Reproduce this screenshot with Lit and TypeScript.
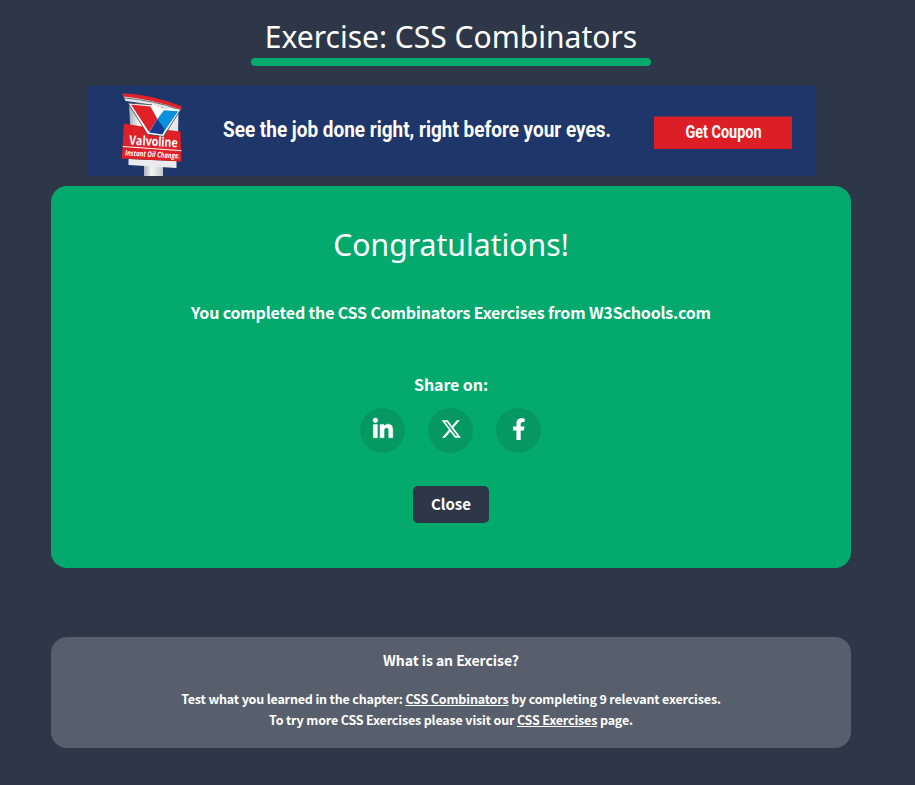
import { LitElement, html, css, svg } from "lit";
import { customElement } from "lit/decorators.js";

@customElement("ad-banner")
class AdBanner extends LitElement {
  static styles = css`
    :host { display: block; width: 728px; height: 90px; }
    svg { display: block; }
    .copy { font-family: Roboto, "Liberation Sans", sans-serif; font-weight: 700; fill: #fff; }
    .brand { font-family: "Open Sans", "Noto Sans", sans-serif; font-weight: 700; fill: #fff; }
    .sub { font-family: "Open Sans", "Noto Sans", sans-serif; font-weight: 700; font-style: italic; fill: #fff; }
  `;
  render() {
    return html`<svg width="728" height="90" viewBox="0 0 728 90">
      <defs>
        <linearGradient id="pole"><stop offset="0" stop-color="#aeb2b8" /><stop offset=".4" stop-color="#f4f4f4" /><stop offset="1" stop-color="#c4c7cb" /></linearGradient>
        <linearGradient id="back"><stop offset="0" stop-color="#a9aeb6" /><stop offset=".2" stop-color="#f5f5f6" /><stop offset="1" stop-color="#e4e6e9" /></linearGradient>
      </defs>
      <rect width="728" height="90" fill="#1f366a" />
      <g transform="translate(1 0)">
        <path d="M56 76H75V90H56z" fill="url(#pole)" />
        <path d="M40.500 73L88.500 75V82L40.500 79z" fill="#e9ebed" />
        <path d="M41 18L42.500 45L90 50L90.500 26z" fill="url(#back)" />
        <path d="M35 9Q63 11 92.500 22L91.500 26Q64 18 37.500 15z" fill="#e3e5e7" />
        <path d="M36 12Q65 14 92.500 24" fill="none" stroke="#656c79" stroke-width="1" />
        <path d="M34.700 7.300Q64 8.500 93.500 20.300V23.700Q64 13 35 10.500z" fill="#e12229" />
        <path d="M36 37.600Q64 43 92.500 45.500L93.500 75.500L33.800 72.500z" fill="#df2027" />
        <path d="M40 17L64 18.500L75 22L92.500 23.800L75.500 50.500L59.500 48.300z" fill="#fff" />
        <path d="M64 18.800L40 17L59.500 48.300L75.500 50.500L92.500 23.800" fill="none" stroke="#454b59" stroke-width=".9" />
        <path d="M43 18.500L62.500 20.500L69.300 33L61 46z" fill="#df2027" />
        <path d="M76 24.200L90.200 25.200L74.500 48L69.300 33z" fill="#0a91db" />
        <path d="M69.300 33L61 46.500L74.500 48.500L76.500 43z" fill="#173a91" />
        <path d="M34.800 60.500L93.500 64.700" stroke="#fff" stroke-width="1" />
        <g transform="rotate(3.200 41 59)">
          <text class="brand" x="41" y="58.600" font-size="13" textLength="48.500" lengthAdjust="spacingAndGlyphs">Valvoline</text>
          <text class="sub" x="37.600" y="69.700" font-size="7.700" textLength="55" lengthAdjust="spacingAndGlyphs">Instant Oil Change.</text>
        </g>
      </g>
      <text class="copy" x="136" y="51" font-size="22.500" textLength="388" lengthAdjust="spacingAndGlyphs">See the job done right, right before your eyes.</text>
      <rect x="567" y="30.500" width="138" height="32.500" fill="#dc1f26" />
      <text class="copy" x="598.500" y="52" font-size="18.500" textLength="76" lengthAdjust="spacingAndGlyphs">Get Coupon</text>
    </svg>`;
  }
}

const icons = [
  { label: "LinkedIn", art: svg`<path fill="#fff" stroke="#fff" stroke-width="9" transform="translate(13 9.900) scale(.0442)" d="M100.280 448H7.400V148.900h92.880zM53.790 108.100C24.090 108.100 0 83.500 0 53.800a53.790 53.790 0 0 1 107.580 0c0 29.700-24.100 54.300-53.790 54.300zM447.900 448h-92.680V302.400c0-34.700-.7-79.200-48.290-79.200-48.290 0-55.690 37.700-55.690 76.700V448h-92.780V148.900h89.080v40.800h1.300c12.400-23.500 42.690-48.300 87.880-48.300 94 0 111.280 61.900 111.280 142.300V448z"/>` },
  { label: "X", art: svg`<path fill="#fff" transform="translate(12.500 10.300) scale(.042)" d="M389.200 48h70.600L305.600 224.200 487 464H345L233.700 318.600 106.500 464H35.800L200.700 275.500 26.800 48H172.400L272.900 180.900 389.200 48zM364.400 421.800h39.100L151.100 88h-42L364.400 421.800z"/>` },
  { label: "Facebook", art: svg`<path fill="#fff" transform="translate(16 10.300) scale(.0425)" d="M279.140 288l14.220-92.660h-88.910v-60.130c0-25.350 12.420-50.060 52.240-50.060h40.420V6.260S260.430 0 225.360 0c-73.220 0-121.080 44.380-121.080 124.720v70.620H22.890V288h81.390v224h100.170V288z"/>` },
];

const heading = (text: string, width: number) => html`<svg width="400" height="44" viewBox="0 0 400 44">
  <text x="200" y="34" text-anchor="middle" textLength=${width} lengthAdjust="spacingAndGlyphs">${text}</text>
</svg>`;

@customElement("app-root")
class AppRoot extends LitElement {
  static styles = css`
    :host {
      display: flex; flex-direction: column; align-items: center; box-sizing: border-box;
      width: 915px; height: 785px; padding: 14px 13px 0 0; overflow: hidden;
      background: #2e3748; color: #fff; text-align: center;
      font-family: "Noto Sans CJK SC", "Noto Sans", sans-serif; font-weight: 700;
    }
    h1, h2, h3, p { margin: 0; white-space: nowrap; }
    h1, h2 { height: 44px; font: 400 31px/44px "Noto Sans", "Open Sans", sans-serif; }
    h1 svg, h2 svg { display: block; fill: #fff; overflow: visible; }
    .rule { width: 400px; height: 8px; border-radius: 4px; background: #04aa6d; }
    ad-banner { margin: 20px 0 10px; }
    .done {
      display: flex; flex-direction: column; align-items: center; box-sizing: border-box;
      width: 800px; height: 382px; padding-top: 36px; border-radius: 16px; background: #04aa6d;
    }
    .lead { font-size: 16px; line-height: 26px; margin-top: 33px; letter-spacing: -.165px; }
    .share { font-size: 16px; line-height: 26px; margin-top: 46px; letter-spacing: -.1px; }
    .icons { display: flex; gap: 23px; margin: 11px 1px 0 0; }
    .icons a { width: 45px; height: 45px; border-radius: 50%; background: #059862; }
    .icons svg { display: block; }
    button {
      width: 76px; height: 37px; margin-top: 33px; padding: 0 0 2px; border: 0; border-radius: 5px;
      background: #2e3748; color: #fff; font: inherit; font-size: 15px;
    }
    .about {
      box-sizing: border-box; width: 800px; height: 111px; margin-top: 69px; padding-top: 12px;
      border-radius: 16px; background: #585f6c;
    }
    h3 { font-size: 14px; line-height: 22px; margin-bottom: 17px; letter-spacing: -.05px; }
    .about p { font-size: 12.500px; line-height: 21px; letter-spacing: -.16px; }
    .about a { color: inherit; text-decoration: underline; }
  `;
  render() {
    return html`
      <h1>${heading("Exercise: CSS Combinators", 372.5)}</h1>
      <div class="rule"></div>
      <ad-banner></ad-banner>
      <section class="done">
        <h2>${heading("Congratulations!", 235.5)}</h2>
        <p class="lead">You completed the CSS Combinators Exercises from W3Schools.com</p>
        <p class="share">Share on:</p>
        <div class="icons">
          ${icons.map((i) => html`<a aria-label=${i.label}><svg width="45" height="45" viewBox="0 0 45 45">${i.art}</svg></a>`)}
        </div>
        <button>Close</button>
      </section>
      <section class="about">
        <h3>What is an Exercise?</h3>
        <p>Test what you learned in the chapter: <a>CSS Combinators</a> by completing 9 relevant exercises.</p>
        <p>To try more CSS Exercises please visit our <a>CSS Exercises</a> page.</p>
      </section>
    `;
  }
}
